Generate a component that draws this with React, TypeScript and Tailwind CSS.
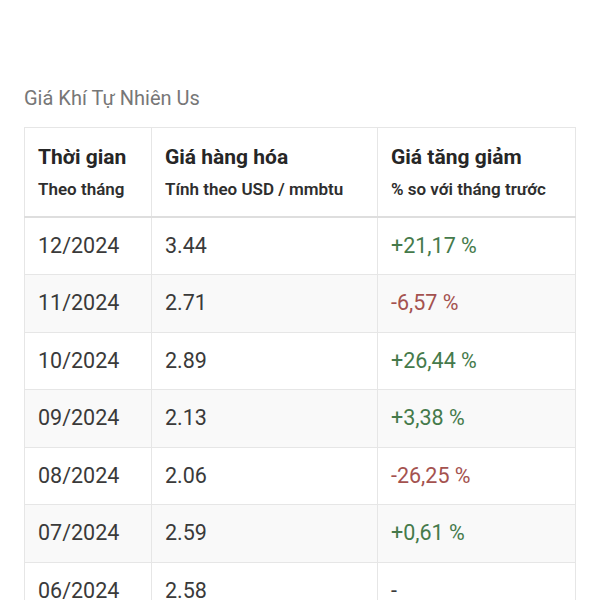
import React from "react";

type Row = { month: string; price: string; change: string; dir: "up" | "down" | "none" };

const rows: Row[] = [
  { month: "12/2024", price: "3.44", change: "+21,17 %", dir: "up" },
  { month: "11/2024", price: "2.71", change: "-6,57 %", dir: "down" },
  { month: "10/2024", price: "2.89", change: "+26,44 %", dir: "up" },
  { month: "09/2024", price: "2.13", change: "+3,38 %", dir: "up" },
  { month: "08/2024", price: "2.06", change: "-26,25 %", dir: "down" },
  { month: "07/2024", price: "2.59", change: "+0,61 %", dir: "up" },
  { month: "06/2024", price: "2.58", change: "-", dir: "none" },
];

const HeadCell: React.FC<{ title: string; sub: string; className?: string }> = ({ title, sub, className }) => (
  <th className={"border border-[#e6e6e6] border-b-2 border-b-[#dedede] px-[13px] pt-[16px] pb-[16px] text-left align-top " + (className ?? "")}>
    <div className="text-[21px] leading-[26px] font-bold text-[#262626]">{title}</div>
    <div className="mt-[8px] text-[17px] leading-[22px] font-semibold text-[#2e2e2e]">{sub}</div>
  </th>
);

export default function App() {
  return (
    <div className="min-h-[600px] bg-white pt-[84px] font-['Roboto','Liberation_Sans',sans-serif]">
      <h2 className="ml-[24px] text-[20px] leading-[28px] font-normal text-[#777777]">Giá Khí Tự Nhiên Us</h2>
      <table className="ml-[24px] mt-[15px] w-[552px] border-collapse border border-[#e6e6e6]">
        <thead>
          <tr>
            <HeadCell title="Thời gian" sub="Theo tháng" className="w-[127px]" />
            <HeadCell title="Giá hàng hóa" sub="Tính theo USD / mmbtu" className="w-[226px]" />
            <HeadCell title="Giá tăng giảm" sub="% so với tháng trước" />
          </tr>
        </thead>
        <tbody>
          {rows.map((r, i) => (
            <tr key={r.month} className={i % 2 === 1 ? "bg-[#f9f9f9]" : "bg-white"}>
              <td className="h-[57.5px] border border-[#e6e6e6] px-[13px] text-[21.5px] text-[#3a3a3a]">{r.month}</td>
              <td className="h-[57.5px] border border-[#e6e6e6] px-[13px] text-[21.5px] text-[#3a3a3a]">{r.price}</td>
              <td
                className={
                  "h-[57.5px] border border-[#e6e6e6] px-[13px] text-[21.5px] " +
                  (r.dir === "up" ? "text-[#457a4b]" : r.dir === "down" ? "text-[#a4524f]" : "text-[#3a3a3a]")
                }
              >
                {r.change}
              </td>
            </tr>
          ))}
        </tbody>
      </table>
    </div>
  );
}
